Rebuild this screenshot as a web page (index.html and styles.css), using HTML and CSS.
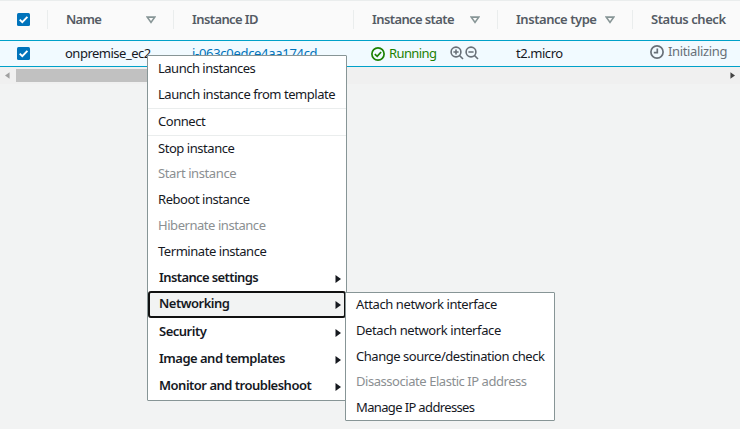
FILE: index.html
```html
<!DOCTYPE html>
<html lang="en">
<head>
<meta charset="utf-8">
<title>Instances</title>
<link rel="stylesheet" href="styles.css">
</head>
<body>
<svg class="defs" width="0" height="0">
  <symbol id="check" viewBox="0 0 13 13"><rect width="13" height="13" rx="1.5" fill="#0073bb"/><path d="M2.7 6.6 5.3 9.2 10.4 3.8" fill="none" stroke="#fff" stroke-width="1.9"/></symbol>
  <symbol id="sort" viewBox="0 0 10 8"><path d="M1.3 1.1H8.7L5 6.4Z" fill="none" stroke="#879596" stroke-width="1.6"/></symbol>
  <symbol id="arrow" viewBox="0 0 6 8"><path d="M.5 0 6 4 .5 8Z" fill="currentColor"/></symbol>
</svg>
<div class="table">
  <div class="row head">
    <div class="cell pick"><svg class="box"><use href="#check"/></svg></div>
    <div class="cell name"><span class="h-name">Name</span><svg class="sort"><use href="#sort"/></svg></div>
    <div class="cell"><span class="h-id">Instance ID</span></div>
    <div class="cell"><span class="h-state">Instance state</span><svg class="sort"><use href="#sort"/></svg></div>
    <div class="cell"><span class="h-type">Instance type</span><svg class="sort"><use href="#sort"/></svg></div>
    <div class="cell"><span class="h-status">Status check</span></div>
  </div>
  <div class="row body">
    <div class="cell pick"><svg class="box"><use href="#check"/></svg></div>
    <div class="cell name"><span class="b-name">onpremise_ec2</span></div>
    <div class="cell"><a class="b-id">i-063c0edce4aa174cd</a></div>
    <div class="cell state">
      <svg class="icon" viewBox="0 0 14 14"><circle cx="7" cy="7" r="6.1"/><path d="M3.8 7.2 6.2 9.4 10.1 5"/></svg>
      <span class="b-state">Running</span>
      <svg class="zooms" viewBox="0 0 28 14"><circle cx="6" cy="6" r="4.9"/><path d="M3.4 6H8.6M6 3.4V8.6M9.5 9.5 13 13"/><circle cx="21" cy="6" r="4.9"/><path d="M18.4 6H23.6M24.5 9.5 28 13"/></svg>
    </div>
    <div class="cell"><span class="b-type">t2.micro</span></div>
    <div class="cell status">
      <svg class="icon" viewBox="0 0 14 14"><circle cx="7" cy="7" r="6.1"/><path d="M7.3 3.5V7.6H3.8"/></svg>
      <span class="b-status">Initializing</span>
    </div>
  </div>
  <div class="scroll"><svg class="left"><use href="#arrow"/></svg><div class="thumb"></div><svg class="right"><use href="#arrow"/></svg></div>
</div>
<div class="menu main">
  <div class="item h26"><span class="m1">Launch instances</span></div>
  <div class="item"><span class="m2">Launch instance from template</span></div>
  <div class="item sep h26"><span class="m3">Connect</span></div>
  <div class="item sep h26"><span class="m4">Stop instance</span></div>
  <div class="item off"><span class="m5">Start instance</span></div>
  <div class="item h26"><span class="m6">Reboot instance</span></div>
  <div class="item off"><span class="m7">Hibernate instance</span></div>
  <div class="item h26"><span class="m8">Terminate instance</span></div>
  <div class="item group first"><span class="g1">Instance settings</span><svg><use href="#arrow"/></svg></div>
  <div class="item group active"><span class="g2">Networking</span><svg><use href="#arrow"/></svg></div>
  <div class="item group"><span class="g3">Security</span><svg><use href="#arrow"/></svg></div>
  <div class="item group"><span class="g4">Image and templates</span><svg><use href="#arrow"/></svg></div>
  <div class="item group"><span class="g5">Monitor and troubleshoot</span><svg><use href="#arrow"/></svg></div>
</div>
<div class="menu sub">
  <div class="item"><span class="s1">Attach network interface</span></div>
  <div class="item h26"><span class="s2">Detach network interface</span></div>
  <div class="item"><span class="s3">Change source/destination check</span></div>
  <div class="item off"><span class="s4">Disassociate Elastic IP address</span></div>
  <div class="item h26"><span class="s5">Manage IP addresses</span></div>
</div>
</body>
</html>
```
FILE: styles.css
```css
* { box-sizing: border-box; }
body { margin: 0; height: 429px; overflow: hidden; background: #f2f3f3; color: #16191f; font: 13px/20px "Noto Sans", sans-serif; letter-spacing: -0.45px; }
svg { display: block; flex: none; overflow: visible; }
.defs { position: absolute; }
span, a { white-space: nowrap; }
.row { display: grid; grid-template-columns: 48px 126px 180px 144px 135px 107px; }
.cell { display: flex; align-items: center; padding-left: 18px; }
.pick { padding-left: 17px; }
.name { padding-left: 17px; }
.box { width: 13px; height: 13px; }
.head { height: 40px; background: #fafafa; border-top: 1px solid #eaeded; color: #545b64; font-weight: 600; }
.head .cell { height: 19px; margin-top: 9px; border-right: 1px solid #eaeded; justify-content: space-between; padding-right: 17px; }
.head .cell:last-child { border: 0; }
.head .name { padding-left: 18px; }
.h-name { letter-spacing: -0.7px; }
.head .pick { padding-left: 17px; }
.head .box { margin-top: -1px; }
.head span { margin-bottom: 2px; }
.h-id, .h-state { letter-spacing: -0.6px; }
.sort { width: 10px; height: 8px; }
.body { height: 27px; background: #f1faff; border: solid #00a1c9; border-width: 1px 0; }
.body .cell { padding-bottom: 4px; }
.body .box { margin-top: 1px; }
.b-name { letter-spacing: -0.5px; }
.b-id { color: #0073bb; text-decoration: underline; letter-spacing: -0.3px; }
.b-state { letter-spacing: -0.6px; }
.body .state { padding-left: 17px; color: #1d8102; }
.icon { width: 14px; height: 14px; margin-right: 4px; fill: none; stroke: currentColor; stroke-width: 1.7; }
.state .icon { margin-top: 2px; }
.zooms { width: 28px; height: 14px; margin-left: auto; margin-right: 20px; fill: none; stroke: #687078; stroke-width: 1.6; }
.body .status { padding-left: 17px; color: #687078; padding-bottom: 7px; }
.status .icon { margin-top: 2px; }
.b-status { letter-spacing: -0.35px; }
.scroll { display: flex; align-items: center; height: 17px; background: #f0f0f0; padding: 0 5px; }
.scroll svg { width: 5px; height: 7px; color: #444; }
.scroll .left { transform: scaleX(-1); color: #a0a0a0; }
.thumb { width: 300px; height: 13px; margin-left: 6px; background: #c1c1c1; }
.scroll .right { margin-left: auto; }
.menu { position: absolute; background: #fff; border: 1px solid #879596; border-radius: 1px; }
.main { left: 147px; top: 55px; width: 200px; height: 346px; }
.sub { left: 345px; top: 292px; width: 210px; height: 129px; }
.item { display: flex; align-items: center; height: 25.5px; padding-left: 10px; }
.item span { margin-bottom: 2px; }
.sub .item span { margin-bottom: 3px; }
.h26 { height: 26px; }
.sep { height: 27px; border-top: 1px solid #eaeded; }
.off { color: #8b8f92; }
.group { height: 27px; padding: 0 5px 0 11px; font-weight: 600; justify-content: space-between; letter-spacing: -0.5px; }
.group svg { width: 6px; height: 8px; margin-top: 2px; }
.first { height: 26px; }
.active { width: 198px; margin-bottom: 1px; background: #f2f3f3; border: 2px solid #111; border-radius: 3px; padding: 0 3px 0 9px; }
.m1 { letter-spacing: -0.5px; }
.m5, .s1, .s2 { letter-spacing: -0.4px; }
.g1 { letter-spacing: -0.6px; }
.s3 { letter-spacing: -0.47px; }
.s5 { letter-spacing: -0.64px; }
```
